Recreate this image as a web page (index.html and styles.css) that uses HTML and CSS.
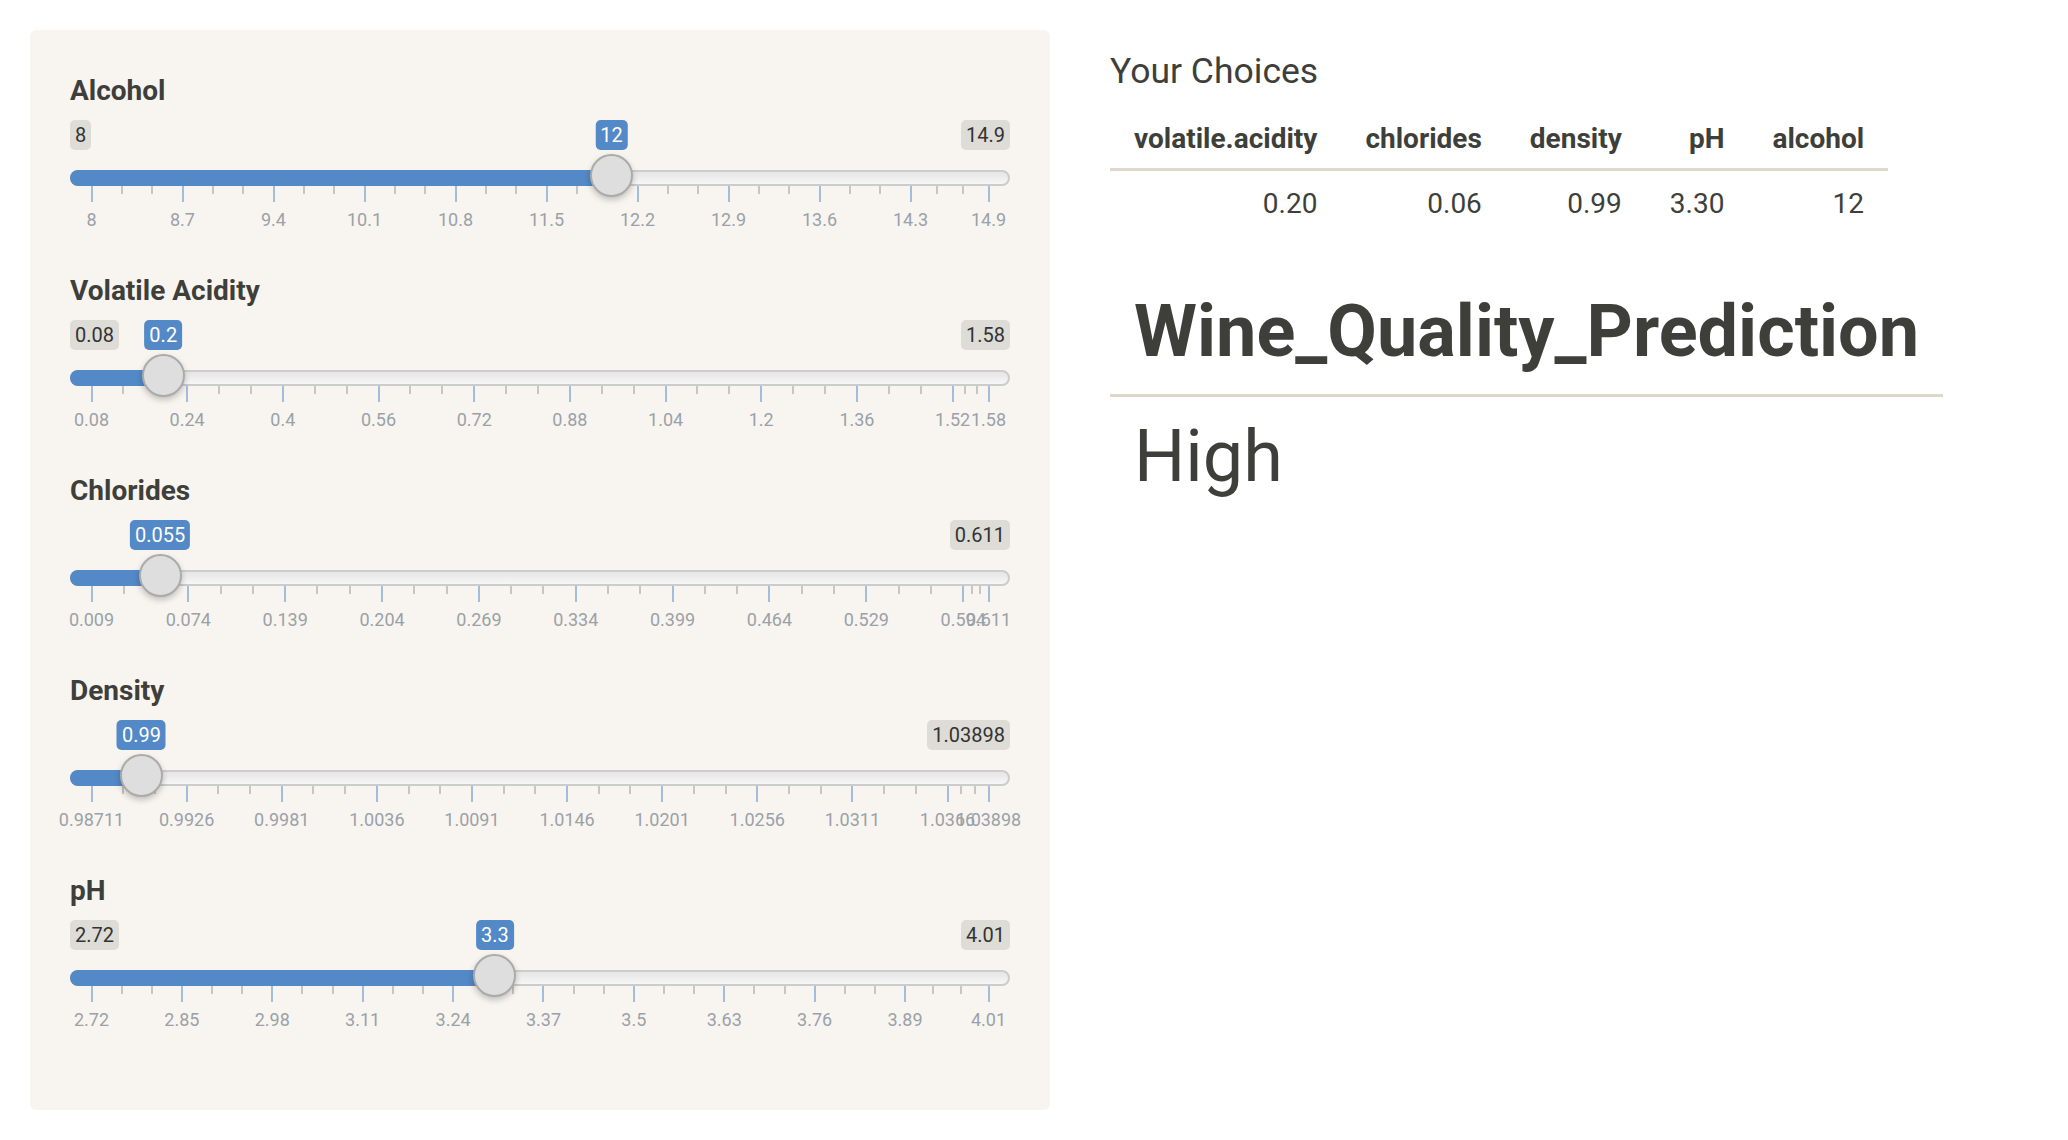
FILE: index.html
```html
<!DOCTYPE html>
<html lang="en">
<head>
<meta charset="utf-8">
<title>Wine Quality Prediction</title>
<link rel="stylesheet" href="styles.css">
</head>
<body>
<div class="page">
  <aside class="well">
    <div class="form-group">
      <label class="control-label">Alcohol</label>
      <div class="irs" data-min="8" data-max="14.9" data-value="12" data-step="0.7" data-labels="8 8.7 9.4 10.1 10.8 11.5 12.2 12.9 13.6 14.3 14.9">
        <span class="irs-min">8</span>
        <span class="irs-max">14.9</span>
        <span class="irs-line"></span>
        <div class="irs-area">
          <span class="irs-bar"></span>
          <div class="irs-grid"></div>
          <span class="irs-single">12</span>
          <span class="irs-handle"></span>
        </div>
      </div>
    </div>
    <div class="form-group">
      <label class="control-label">Volatile Acidity</label>
      <div class="irs" data-min="0.08" data-max="1.58" data-value="0.2" data-step="0.16" data-labels="0.08 0.24 0.4 0.56 0.72 0.88 1.04 1.2 1.36 1.52 1.58">
        <span class="irs-min">0.08</span>
        <span class="irs-max">1.58</span>
        <span class="irs-line"></span>
        <div class="irs-area">
          <span class="irs-bar"></span>
          <div class="irs-grid"></div>
          <span class="irs-single">0.2</span>
          <span class="irs-handle"></span>
        </div>
      </div>
    </div>
    <div class="form-group">
      <label class="control-label">Chlorides</label>
      <div class="irs" data-min="0.009" data-max="0.611" data-value="0.055" data-step="0.065" data-labels="0.009 0.074 0.139 0.204 0.269 0.334 0.399 0.464 0.529 0.594 0.611">
        <span class="irs-max">0.611</span>
        <span class="irs-line"></span>
        <div class="irs-area">
          <span class="irs-bar"></span>
          <div class="irs-grid"></div>
          <span class="irs-single">0.055</span>
          <span class="irs-handle"></span>
        </div>
      </div>
    </div>
    <div class="form-group">
      <label class="control-label">Density</label>
      <div class="irs" data-min="0.98711" data-max="1.03898" data-value="0.99" data-step="0.0055" data-labels="0.98711 0.9926 0.9981 1.0036 1.0091 1.0146 1.0201 1.0256 1.0311 1.0366 1.03898">
        <span class="irs-max">1.03898</span>
        <span class="irs-line"></span>
        <div class="irs-area">
          <span class="irs-bar"></span>
          <div class="irs-grid"></div>
          <span class="irs-single">0.99</span>
          <span class="irs-handle"></span>
        </div>
      </div>
    </div>
    <div class="form-group">
      <label class="control-label">pH</label>
      <div class="irs" data-min="2.72" data-max="4.01" data-value="3.3" data-step="0.13" data-labels="2.72 2.85 2.98 3.11 3.24 3.37 3.5 3.63 3.76 3.89 4.01">
        <span class="irs-min">2.72</span>
        <span class="irs-max">4.01</span>
        <span class="irs-line"></span>
        <div class="irs-area">
          <span class="irs-bar"></span>
          <div class="irs-grid"></div>
          <span class="irs-single">3.3</span>
          <span class="irs-handle"></span>
        </div>
      </div>
    </div>
  </aside>

  <main class="results">
    <h3 class="choices-title">Your Choices</h3>
    <table class="table choices">
      <thead>
        <tr><th>volatile.acidity</th><th>chlorides</th><th>density</th><th>pH</th><th>alcohol</th></tr>
      </thead>
      <tbody>
        <tr><td>0.20</td><td>0.06</td><td>0.99</td><td>3.30</td><td>12</td></tr>
      </tbody>
    </table>
    <table class="table prediction">
      <thead>
        <tr><th>Wine_Quality_Prediction</th></tr>
      </thead>
      <tbody>
        <tr><td>High</td></tr>
      </tbody>
    </table>
  </main>
</div>
<script src="script.js"></script>
</body>
</html>
```

FILE: styles.css
```css
* { box-sizing: border-box; }

body {
  margin: 0;
  font-family: Roboto, "Liberation Sans", sans-serif;
  color: #3e3f3a;
  background: #ffffff;
}

.page {
  display: flex;
  align-items: flex-start;
  gap: 60px;
  padding: 30px;
}

/* ---------- sidebar well ---------- */
.well {
  flex: none;
  width: 1020px;
  display: flex;
  flex-direction: column;
  padding: 40px;
  background: #f8f5f0;
  border-radius: 6px;
}

.form-group {
  display: flex;
  flex-direction: column;
  height: 200px;
}

.control-label {
  display: block;
  font-size: 28px;
  font-weight: 700;
  line-height: 40px;
  padding-top: 1px;
  margin-bottom: 9px;
}

/* ---------- range slider ---------- */
.irs {
  position: relative;
  height: 150px;
}

.irs-min,
.irs-max,
.irs-single {
  position: absolute;
  top: 0;
  font-size: 20px;
  line-height: 26px;
  padding: 2px 5px;
  border-radius: 5px;
  white-space: nowrap;
}

.irs-min,
.irs-max {
  background: rgba(0, 0, 0, 0.1);
  color: #333333;
}

.irs-min { left: 0; }
.irs-max { right: 0; }

.irs-line {
  position: absolute;
  left: 0;
  right: 0;
  top: 50px;
  height: 16px;
  border: 2px solid #cccccc;
  border-radius: 8px;
  background: linear-gradient(to bottom, #dddddd -50%, #ffffff 150%);
}

.irs-area {
  position: absolute;
  top: 0;
  bottom: 0;
  left: 21.5px;
  right: 21.5px;
}

.irs-bar {
  position: absolute;
  top: 50px;
  left: -21.5px;
  height: 16px;
  background: #5289c6;
  border-radius: 8px 0 0 8px;
}

.irs-single {
  background: #5289c6;
  color: #ffffff;
  transform: translateX(-50%);
}

.irs-handle {
  position: absolute;
  top: 34px;
  width: 43px;
  height: 43px;
  margin-left: -21.5px;
  border-radius: 50%;
  background: #dedede;
  border: 2px solid #ababab;
  box-shadow: 0 3px 6px rgba(0, 0, 0, 0.22);
}

.irs-grid {
  position: absolute;
  top: 66px;
  left: 0;
  right: 0;
  height: 40px;
}

.irs-pol {
  position: absolute;
  top: 0;
  width: 2px;
  height: 16px;
  margin-left: -1px;
  background: #a3bedd;
}

.irs-pol.small {
  height: 8px;
  background: #c8c6c2;
}

.irs-grid-text {
  position: absolute;
  top: 23px;
  font-size: 18px;
  line-height: 22px;
  color: #9aa1a9;
  white-space: nowrap;
  transform: translateX(-50%);
}

/* ---------- results ---------- */
.results {
  display: flex;
  flex-direction: column;
  align-items: flex-start;
}

.choices-title {
  margin: 21.5px 0 0;
  font-size: 35.5px;
  font-weight: 400;
  line-height: 38.5px;
}

.table {
  border-collapse: separate;
  border-spacing: 0;
}

.table th {
  font-weight: 700;
  border-bottom: 3px solid #dfd7ca;
  white-space: nowrap;
}

.table td {
  white-space: nowrap;
}

.choices {
  margin-top: 25.3px;
  font-size: 28px;
  line-height: 32.4px;
}

.choices th,
.choices td {
  text-align: right;
}

.choices th { padding: 8px 24px 12px; }
.choices td { padding: 17px 24px 12px; }

.prediction {
  margin-top: 40px;
  font-size: 72px;
  line-height: 80.3px;
}

.prediction th,
.prediction td {
  text-align: left;
}

.prediction th { padding: 19.5px 24px 22px; }
.prediction td { padding: 19.7px 24px 10px; font-weight: 400; }
```

FILE: script.js
```js
document.querySelectorAll('.irs').forEach(function (irs) {
  var min = parseFloat(irs.dataset.min);
  var max = parseFloat(irs.dataset.max);
  var value = parseFloat(irs.dataset.value);
  var step = parseFloat(irs.dataset.step);
  var labels = irs.dataset.labels.split(' ');

  function pct(v) {
    return Math.min(100, (v - min) / (max - min) * 100);
  }

  var p = pct(value);
  var area = irs.querySelector('.irs-area');
  area.querySelector('.irs-bar').style.width = 'calc(' + p + '% + 21.5px)';
  area.querySelector('.irs-single').style.left = p + '%';
  area.querySelector('.irs-handle').style.left = p + '%';

  var grid = area.querySelector('.irs-grid');

  function addPol(pos, small) {
    var pol = document.createElement('span');
    pol.className = small ? 'irs-pol small' : 'irs-pol';
    pol.style.left = pos + '%';
    grid.appendChild(pol);
  }

  var prev = null;
  labels.forEach(function (text, i) {
    var pos = i === labels.length - 1 ? 100 : pct(min + i * step);
    if (prev !== null) {
      for (var z = 1; z <= 2; z++) {
        addPol(prev + (pos - prev) * z / 3, true);
      }
    }
    addPol(pos, false);
    var t = document.createElement('span');
    t.className = 'irs-grid-text';
    t.style.left = pos + '%';
    t.textContent = text;
    grid.appendChild(t);
    prev = pos;
  });
});
```
